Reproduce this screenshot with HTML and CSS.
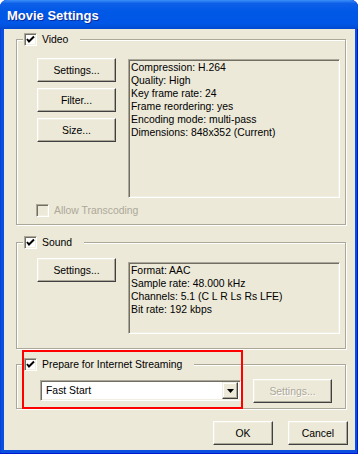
FILE: index.html
```html
<!DOCTYPE html>
<html lang="en">
  <head>
    <meta charset="UTF-8" />
    <title>Movie Settings</title>
    <link rel="stylesheet" href="styles.css">
  </head>
  <body>
    <div class="window">
      <div class="titlebar">
        <span class="title">Movie Settings</span>
      </div>

      <div class="client">
        <!-- Video -->
        <fieldset class="group group-video">
          <legend><span class="check checked"><svg width="13" height="13" viewBox="0 0 13 13"><polyline points="3,6 5,8.5 10,3.5" fill="none" stroke="#000" stroke-width="2"/></svg></span>Video</legend>
          <div class="group-body video-body">
            <div class="row">
              <div class="btn-col">
                <button class="btn">Settings...</button>
                <button class="btn">Filter...</button>
                <button class="btn">Size...</button>
              </div>
              <div class="info info-video">
                Compression: H.264<br />
                Quality: High<br />
                Key frame rate: 24<br />
                Frame reordering: yes<br />
                Encoding mode: multi-pass<br />
                Dimensions: 848x352 (Current)
              </div>
            </div>
            <div class="check-row disabled">
              <span class="check"></span>Allow Transcoding
            </div>
          </div>
        </fieldset>

        <!-- Sound -->
        <fieldset class="group group-sound">
          <legend><span class="check checked"><svg width="13" height="13" viewBox="0 0 13 13"><polyline points="3,6 5,8.5 10,3.5" fill="none" stroke="#000" stroke-width="2"/></svg></span>Sound</legend>
          <div class="group-body sound-body">
            <div class="row">
              <div class="btn-col">
                <button class="btn">Settings...</button>
              </div>
              <div class="info info-sound">
                Format: AAC<br />
                Sample rate: 48.000 kHz<br />
                Channels: 5.1 (C L R Ls Rs LFE)<br />
                Bit rate: 192 kbps
              </div>
            </div>
          </div>
        </fieldset>

        <!-- Streaming -->
        <fieldset class="group group-stream">
          <legend><span class="check checked"><svg width="13" height="13" viewBox="0 0 13 13"><polyline points="3,6 5,8.5 10,3.5" fill="none" stroke="#000" stroke-width="2"/></svg></span>Prepare for Internet Streaming</legend>
          <div class="group-body stream-body">
            <div class="row">
              <div class="combo">
                <span class="combo-text">Fast Start</span>
                <span class="combo-arrow"><svg width="7" height="4" viewBox="0 0 7 4"><polygon points="0,0 7,0 3.5,4" fill="#000"/></svg></span>
              </div>
              <button class="btn btn-disabled stream-settings">Settings...</button>
            </div>
          </div>
        </fieldset>

        <div class="button-bar">
          <button class="btn">OK</button>
          <button class="btn">Cancel</button>
        </div>

        <div class="highlight"></div>
      </div>
    </div>
  </body>
</html>
```

FILE: styles.css
```css
* {
  margin: 0;
  padding: 0;
  box-sizing: border-box;
}

body {
  background: #fff;
  font-family: "Liberation Sans", Arial, sans-serif;
  font-size: 10.4px;
  color: #000;
}

.window {
  width: 358px;
  height: 454px;
  background: #0a4fe0;
  border-radius: 7px 7px 0 0;
  padding: 0 3px 4px 4px;
  box-shadow: inset -1px 0 #0019cf, inset 0 -1px #0019cf, inset 1px 0 #0843d6;
  overflow: hidden;
}

.titlebar {
  height: 29px;
  margin: 0 -3px 0 -4px;
  padding: 8px 7px 0;
  border-radius: 7px 7px 0 0;
  background: linear-gradient(#3d8ff6 0%, #2a7ef3 4%, #0d5fe8 12%, #0058e6 40%, #0057e7 80%, #004fd9 94%, #0047cd 100%);
}

.title {
  color: #fff;
  font-weight: bold;
  font-size: 13px;
  line-height: 16px;
  text-shadow: 1px 1px #0a2a9a;
}

.client {
  position: relative;
  height: 421px;
  background: #ece9d8;
  padding-top: 4px;
}

/* group boxes */
.group {
  margin: 0 9px 0 12px;
  padding: 0;
  border: 1px solid #aca899;
  box-shadow: inset 1px 1px #fff, 1px 1px #fff;
  min-width: 0;
}

.group legend {
  display: flex;
  align-items: center;
  height: 13px;
  line-height: 13px;
  margin-left: 6px;
  padding: 0 12px 0 1px;
  background: #ece9d8;
}

.group legend .check {
  margin-right: 5px;
}

.group-video {
  margin-bottom: 11px;
}

.group-sound {
  margin-bottom: 9px;
}

.group-body {
  padding-left: 20px;
  padding-right: 4px;
}

.video-body {
  padding-top: 12px;
  padding-bottom: 7px;
}

.sound-body {
  padding-top: 9px;
  padding-bottom: 14px;
}

.stream-body {
  padding: 9px 0 5px 23px;
}

.row {
  display: flex;
  align-items: flex-start;
  gap: 12px;
}

.btn-col {
  display: flex;
  flex-direction: column;
  gap: 6px;
  width: 79px;
}

/* classic buttons */
.btn {
  width: 79px;
  height: 24px;
  font-family: inherit;
  font-size: inherit;
  color: #000;
  background: #ece9d8;
  border: 1px solid;
  border-color: #fff #404040 #404040 #fff;
  box-shadow: inset -1px -1px #aca899, inset 1px 1px #f1efe2;
}

.btn-disabled {
  color: #aca899;
  text-shadow: 1px 1px #fff;
}

/* read-only info boxes */
.info {
  width: 212px;
  border: 1px solid;
  border-color: #aca899 #fff #fff #aca899;
  box-shadow: inset 1px 1px #716f64, inset -1px -1px #f1efe2;
  padding: 1px 2px;
  line-height: 13px;
  white-space: nowrap;
}

.info-video {
  margin-top: 1px;
  height: 139px;
}

.info-sound {
  margin-top: 4px;
  height: 72px;
}

/* checkboxes */
.check {
  display: inline-block;
  width: 13px;
  height: 13px;
  flex: none;
  border: 1px solid;
  border-color: #aca899 #fff #fff #aca899;
  box-shadow: inset 1px 1px #716f64, inset -1px -1px #f1efe2;
  background: #fff;
  position: relative;
}

.check svg {
  position: absolute;
  left: -1px;
  top: -1px;
}

.check-row {
  display: flex;
  align-items: center;
  gap: 5px;
  margin-top: 6px;
  height: 13px;
  line-height: 13px;
  margin-left: -1px;
}

.check-row.disabled {
  color: #aca899;
}

.check-row.disabled .check {
  background: #ece9d8;
}

/* combo box */
.combo {
  display: flex;
  align-items: center;
  width: 201px;
  height: 21px;
  background: #fff;
  border: 1px solid;
  border-color: #aca899 #fff #fff #aca899;
  box-shadow: inset 1px 1px #716f64, inset -1px -1px #f1efe2;
  padding: 2px 2px 2px 5px;
}

.combo-text {
  flex: 1;
}

.combo-arrow {
  display: flex;
  align-items: center;
  justify-content: center;
  width: 16px;
  height: 17px;
  background: #ece9d8;
  border: 1px solid;
  border-color: #f1efe2 #404040 #404040 #f1efe2;
  box-shadow: inset -1px -1px #aca899, inset 1px 1px #fff;
}

.stream-settings {
  margin-top: -1px;
}

.button-bar {
  display: flex;
  justify-content: flex-end;
  gap: 15px;
  margin-top: 12px;
  padding-right: 7px;
}

.button-bar .btn {
  width: 60px;
}

/* red annotation frame */
.highlight {
  position: absolute;
  left: 18px;
  top: 321px;
  width: 221px;
  height: 59px;
  border: 2px solid #f00;
}
```
